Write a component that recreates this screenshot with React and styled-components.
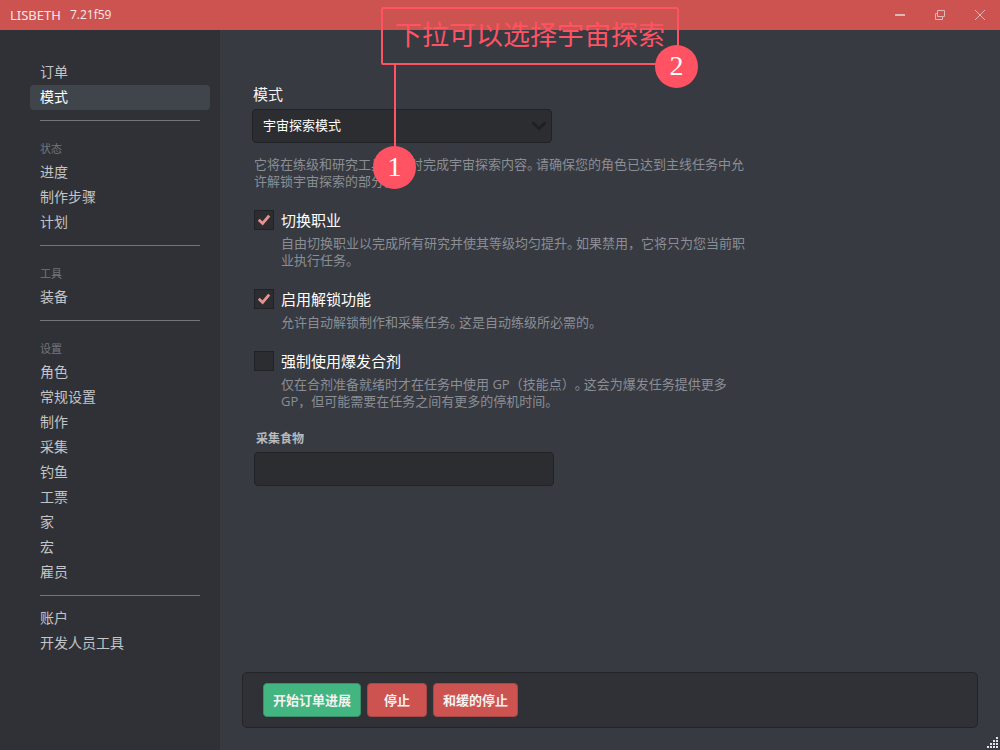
import React from "react";
import styled, { createGlobalStyle } from "styled-components";

const GlobalStyle = createGlobalStyle`
  *, *::before, *::after { box-sizing: border-box; }
  body {
    margin: 0;
    background: #373a41;
    color: #dcddde;
    font-family: "Open Sans", "Noto Sans CJK SC", sans-serif;
    font-size: 14px;
  }
  button, input, select { font: inherit; color: inherit; }
`;

const Window = styled.div`
  position: relative;
  min-height: 100vh;
  display: flex;
  flex-direction: column;
`;

const TitleBar = styled.header`
  height: 30px;
  display: flex;
  align-items: center;
  justify-content: space-between;
  background: #cd5351;
`;

const Brand = styled.div`
  display: flex;
  align-items: center;
  gap: 9px;
  padding-left: 10px;
  line-height: 30px;
  color: #f7e6e6;
`;

const AppName = styled.span`
  font-family: "Noto Sans", sans-serif;
  font-size: 13px;
`;

const Version = styled.span`
  font-size: 12px;
  color: #f9eaea;
`;

const WindowControls = styled.div`
  display: flex;
`;

const ControlButton = styled.button`
  width: 40px;
  height: 30px;
  padding: 0;
  border: 0;
  display: grid;
  place-items: center;
  background: transparent;
  color: #dcb9b9;
`;

const Body = styled.div`
  flex: 1;
  display: flex;
`;

const Sidebar = styled.nav`
  flex: 0 0 220px;
  padding: 30px 10px 20px 30px;
  background: #303136;
`;

const NavGroup = styled.section`
  & + & {
    margin-top: 10px;
  }
  & + &::before {
    content: "";
    display: block;
    height: 1px;
    margin: 0 10px 10px;
    background: #72747a;
  }
`;

const NavTitle = styled.h2`
  margin: 0;
  padding: 10px 10px 0;
  height: 29px;
  font-size: 11px;
  line-height: 16px;
  font-weight: 400;
  color: #72757b;
`;

const NavItem = styled.a`
  display: block;
  height: 25px;
  padding: 0 10px;
  border-radius: 4px;
  font-size: 14px;
  line-height: 23px;
  text-decoration: none;
  color: ${(p) => (p.$active ? "#ffffff" : "#c3c4c6")};
  background: ${(p) => (p.$active ? "#40454b" : "transparent")};
`;

const Main = styled.main`
  flex: 1;
  min-width: 0;
  display: flex;
  flex-direction: column;
  justify-content: space-between;
  padding: 54px 22px 22px;
`;

const Form = styled.form`
  max-width: 514px;
  padding-left: 10px;
`;

const FieldLabel = styled.label`
  display: block;
  padding-left: 1px;
  font-size: 15px;
  line-height: 21px;
  color: #f2f3f4;
`;

const SelectWrap = styled.div`
  position: relative;
  width: 300px;
  margin: 4px 0 13px;
`;

const Select = styled.select`
  display: block;
  width: 100%;
  height: 34px;
  padding: 0 32px 2px 10px;
  border: 1px solid #202225;
  border-radius: 4px;
  appearance: none;
  background: #2c2d30;
  font-size: 13px;
  color: #ffffff;
`;

const Chevron = styled.svg`
  position: absolute;
  top: 12px;
  right: 5px;
  pointer-events: none;
`;

const Hint = styled.p`
  margin: 0;
  padding-left: ${(p) => (p.$indent ? 27 : 0)}px;
  font-size: 13px;
  line-height: 17px;
  color: #8b8e94;
`;

const Stop = styled.span`
  display: inline-block;
  width: 9px;
  font-feature-settings: "halt";
`;

const Options = styled.div`
  display: flex;
  flex-direction: column;
  gap: 20px;
  padding: 0 0 0 2px;
`;

const CheckLabel = styled.label`
  display: flex;
  align-items: center;
  gap: 7px;
  margin-bottom: 5px;
  font-size: 15px;
  line-height: 20px;
  color: #ffffff;
`;

const CheckBox = styled.span`
  position: relative;
  width: 20px;
  height: 20px;

  svg {
    position: absolute;
    inset: 0;
    display: none;
    pointer-events: none;
  }
  input:checked + svg {
    display: block;
  }
`;

const CheckInput = styled.input`
  display: block;
  width: 20px;
  height: 20px;
  margin: 0;
  appearance: none;
  border: 1px solid #202225;
  background: #2c2d30;
`;

const FoodLabel = styled.label`
  display: block;
  padding: 0 2px;
  font-size: 12px;
  line-height: 18px;
  font-weight: 700;
  color: #b9bbbe;
`;

const FoodInput = styled.input`
  display: block;
  width: 300px;
  height: 34px;
  margin-top: 4px;
  padding: 0 10px;
  border: 1px solid #202225;
  border-radius: 4px;
  background: #2c2d30;
`;

const ActionBar = styled.footer`
  display: flex;
  align-items: center;
  gap: 6px;
  height: 56px;
  margin-top: 20px;
  padding: 0 20px;
  border: 1px solid #232427;
  border-radius: 5px;
  background: #303136;
`;

const ActionButton = styled.button`
  height: 34px;
  min-width: 60px;
  padding: 0 9px 2px;
  border: 1px solid ${(p) => (p.$tone === "go" ? "#3a8f69" : "#a94748")};
  border-radius: 4px;
  background: ${(p) => (p.$tone === "go" ? "#43b581" : "#cd5351")};
  font-size: 13px;
  font-weight: 700;
  color: #f6f1f1;
`;

const Grip = styled.svg`
  position: absolute;
  right: 2px;
  bottom: 2px;
`;

const Callout = styled.aside`
  position: absolute;
  top: 7px;
  left: 381px;
  width: 298px;
  height: 58px;
  border: 2px solid #ff5263;
  border-radius: 2px;
  font-family: "Noto Sans CJK SC", sans-serif;
  font-size: 27px;
  line-height: 50px;
  text-align: center;
  white-space: nowrap;
  color: #ff5263;
  pointer-events: none;
`;

const Connector = styled.span`
  position: absolute;
  top: 56px;
  left: 11px;
  width: 2px;
  height: 84px;
  background: #ff5263;
`;

const Marker = styled.span`
  position: absolute;
  top: ${(p) => p.$y}px;
  left: ${(p) => p.$x}px;
  width: 43px;
  height: 43px;
  border-radius: 50%;
  background: #ff5263;
  font-family: "Liberation Serif", serif;
  font-size: 28px;
  line-height: 42px;
  color: #ffffff;
`;

const navGroups = [
  { items: ["订单", "模式"] },
  { title: "状态", items: ["进度", "制作步骤", "计划"] },
  { title: "工具", items: ["装备"] },
  {
    title: "设置",
    items: ["角色", "常规设置", "制作", "采集", "钓鱼", "工票", "家", "宏", "雇员"],
  },
  { items: ["账户", "开发人员工具"] },
];

const options = [
  {
    id: "switch-job",
    label: "切换职业",
    checked: true,
    hint: ["自由切换职业以完成所有研究并使其等级均匀提升", "如果禁用，它将只为您当前职业执行任务。"],
  },
  {
    id: "unlock",
    label: "启用解锁功能",
    checked: true,
    hint: ["允许自动解锁制作和采集任务", "这是自动练级所必需的。"],
  },
  {
    id: "cordial",
    label: "强制使用爆发合剂",
    checked: false,
    hint: [
      "仅在合剂准备就绪时才在任务中使用 GP（技能点）",
      "这会为爆发任务提供更多 GP，但可能需要在任务之间有更多的停机时间。",
    ],
  },
];

const gripDots = [
  [9, 0],
  [6, 3], [9, 3],
  [3, 6], [6, 6], [9, 6],
  [0, 9], [3, 9], [6, 9], [9, 9],
];

function Sentences({ parts }) {
  return (
    <>
      {parts[0]}
      <Stop>。</Stop>
      {parts[1]}
    </>
  );
}

function Option({ option }) {
  return (
    <div>
      <CheckLabel htmlFor={option.id}>
        <CheckBox>
          <CheckInput type="checkbox" id={option.id} defaultChecked={option.checked} />
          <svg width="20" height="20" viewBox="0 0 20 20" aria-hidden="true">
            <path d="M4.8 9.8 L8.6 13.4 L15.2 5.6" fill="none" stroke="#ea9292" strokeWidth="2.8" />
          </svg>
        </CheckBox>
        {option.label}
      </CheckLabel>
      <Hint $indent>
        <Sentences parts={option.hint} />
      </Hint>
    </div>
  );
}

export default function App() {
  return (
    <Window>
      <GlobalStyle />
      <TitleBar>
        <Brand>
          <AppName>LISBETH</AppName>
          <Version>7.21f59</Version>
        </Brand>
        <WindowControls>
          <ControlButton type="button" aria-label="最小化">
            <svg width="12" height="12" viewBox="0 0 12 12">
              <path d="M1 6h10" stroke="currentColor" strokeWidth="2" />
            </svg>
          </ControlButton>
          <ControlButton type="button" aria-label="还原">
            <svg width="12" height="12" viewBox="0 0 12 12" fill="none" stroke="currentColor">
              <path d="M3.5 1.5h7v6h-7z M3.5 4.5h-2v6h7v-3" />
            </svg>
          </ControlButton>
          <ControlButton type="button" aria-label="关闭">
            <svg width="12" height="12" viewBox="0 0 12 12">
              <path d="M1 1l10 10M11 1L1 11" stroke="currentColor" />
            </svg>
          </ControlButton>
        </WindowControls>
      </TitleBar>

      <Body>
        <Sidebar>
          {navGroups.map((group) => (
            <NavGroup key={group.items[0]}>
              {group.title && <NavTitle>{group.title}</NavTitle>}
              {group.items.map((item) => (
                <NavItem key={item} href="#" $active={item === "模式"}>
                  {item}
                </NavItem>
              ))}
            </NavGroup>
          ))}
        </Sidebar>

        <Main>
          <Form>
            <FieldLabel htmlFor="mode">模式</FieldLabel>
            <SelectWrap>
              <Select id="mode" defaultValue="cosmic">
                <option value="cosmic">宇宙探索模式</option>
              </Select>
              <Chevron width="16" height="11" viewBox="0 0 16 11" aria-hidden="true">
                <path d="M1.5 1.5 L8 7.5 L14.5 1.5" fill="none" stroke="#1e2023" strokeWidth="3" />
              </Chevron>
            </SelectWrap>
            <Options>
              <Hint>
                <Sentences
                  parts={[
                    "它将在练级和研究工具的同时完成宇宙探索内容",
                    "请确保您的角色已达到主线任务中允许解锁宇宙探索的部分。",
                  ]}
                />
              </Hint>
              {options.map((option) => (
                <Option key={option.id} option={option} />
              ))}
              <div>
                <FoodLabel htmlFor="food">采集食物</FoodLabel>
                <FoodInput id="food" type="text" />
              </div>
            </Options>
          </Form>

          <ActionBar>
            <ActionButton type="button" $tone="go">开始订单进展</ActionButton>
            <ActionButton type="button">停止</ActionButton>
            <ActionButton type="button">和缓的停止</ActionButton>
          </ActionBar>
        </Main>
      </Body>

      <Grip width="11" height="11" viewBox="0 0 11 11" aria-hidden="true">
        {gripDots.map(([x, y]) => (
          <rect key={`${x}-${y}`} x={x} y={y} width="2" height="2" fill="#e3e5ea" />
        ))}
      </Grip>

      <Callout>
        下拉可以选择宇宙探索
        <Connector />
        <Marker $x={-10} $y={137}>1</Marker>
        <Marker $x={272} $y={36}>2</Marker>
      </Callout>
    </Window>
  );
}
